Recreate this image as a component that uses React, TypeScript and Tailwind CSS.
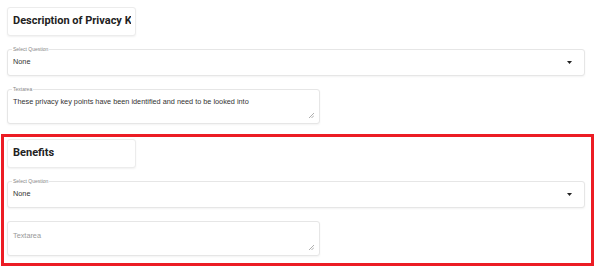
import React from "react";

const font = { fontFamily: '"Liberation Sans", Arial, sans-serif' };

const TitleBox = ({ text }: { text: string }) => (
  <div className="flex h-[29px] w-[129px] items-center rounded-[3px] border border-[#ececec] bg-white pl-[5px] font-['Roboto',sans-serif] text-[11px] font-bold text-[#222] shadow-[0_1px_2px_rgba(0,0,0,0.06)]">
    <div className="w-[118px] overflow-hidden whitespace-nowrap">{text}</div>
  </div>
);

const FloatLabel = ({ text }: { text: string }) => (
  <span className="absolute -top-[4px] left-[4px] bg-white px-[1px] text-[5px] leading-[6px] text-[#888]">
    {text}
  </span>
);

const SelectField = () => (
  <div className="relative flex h-[27px] w-full items-center rounded-[3px] border border-[#e6e6e6] bg-white pl-[5px] pr-[12px] text-[7.3px] text-[#333] shadow-[0_1px_2px_rgba(0,0,0,0.05)]">
    <FloatLabel text="Select Question" />
    <span className="flex-1">None</span>
    <svg width="5" height="3" viewBox="0 0 5 3">
      <path d="M0 0h5L2.5 3z" fill="#222" />
    </svg>
  </div>
);

const Grip = () => (
  <svg width="5" height="5" viewBox="0 0 5 5">
    <path d="M5 0L0 5M5 2.5L2.5 5" stroke="#999" strokeWidth="0.8" />
  </svg>
);

export default function App() {
  return (
    <div className="flex h-[272px] w-[602px] flex-col gap-[10px] bg-white" style={font}>
      <div className="flex flex-col gap-[13px] pl-[7px] pr-[17px] pt-[7px]">
        <TitleBox text="Description of Privacy Key Points" />
        <SelectField />
        <div className="relative flex h-[35px] w-[313px] flex-col rounded-[3px] border border-[#e6e6e6] bg-white px-[5px] pb-[5px] pt-[7px] shadow-[0_1px_2px_rgba(0,0,0,0.05)]">
          <FloatLabel text="Textarea" />
          <div className="flex-1 text-[7.3px] text-[#333]">
            These privacy key points have been identified and need to be looked into
          </div>
          <div className="flex justify-end">
            <Grip />
          </div>
        </div>
      </div>
      <div className="ml-[1px] flex w-[593px] flex-col gap-[13px] border-[3px] border-[#ec1c24] pb-[7px] pl-[3px] pr-[6px] pt-[2px]">
        <TitleBox text="Benefits" />
        <SelectField />
        <div className="flex h-[35px] w-[313px] flex-col rounded-[3px] border border-[#e6e6e6] bg-white px-[5px] pb-[5px] pt-[9px] shadow-[0_1px_2px_rgba(0,0,0,0.05)]">
          <div className="flex-1 text-[7.3px] text-[#999]">Textarea</div>
          <div className="flex justify-end">
            <Grip />
          </div>
        </div>
      </div>
    </div>
  );
}
